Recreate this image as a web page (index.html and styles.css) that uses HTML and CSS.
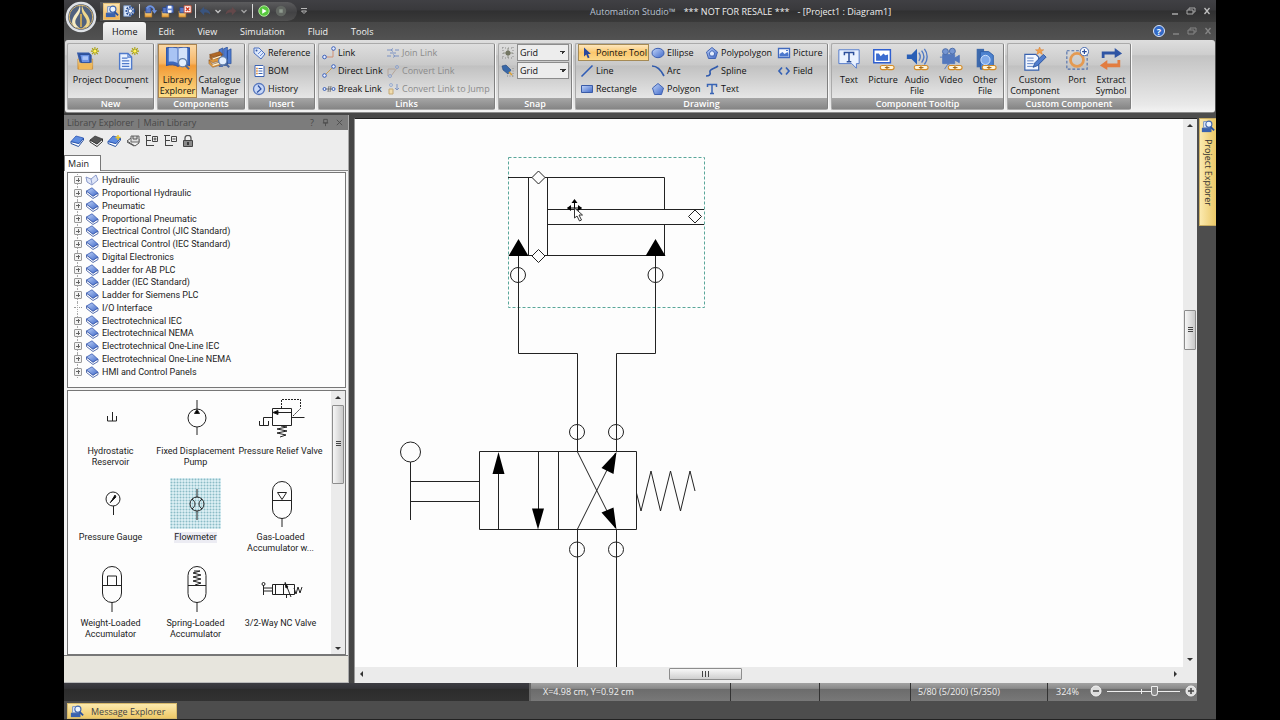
FILE: index.html
```html
<!DOCTYPE html>
<html lang="en">
<head>
<meta charset="utf-8">
<title>Automation Studio - [Project1 : Diagram1]</title>
<link rel="stylesheet" href="styles.css">
</head>
<body>
<svg class="sprite" aria-hidden="true">
  <defs>
    <linearGradient id="gBlue" x1="0" y1="0" x2="1" y2="1"><stop offset="0" stop-color="#c3d6fa"/><stop offset="1" stop-color="#3f68c8"/></linearGradient>
    <linearGradient id="gFolder" x1="0" y1="0" x2="0" y2="1"><stop offset="0" stop-color="#fbe2a0"/><stop offset="1" stop-color="#e39a35"/></linearGradient>
    <symbol id="book" viewBox="0 0 14 12"><path d="M1.500 4v2.500L8 11.500l5-3V6L8 9.200z" fill="#fff" stroke="#2c4a99" stroke-width=".8"/><path d="M1.500 4 7 .8 12.800 6 8 9.200z" fill="url(#gBlue)" stroke="#3a5bb0" stroke-width=".8"/></symbol>
    <symbol id="openbook" viewBox="0 0 14 12"><path d="M1 3l5 2 5-4 2 5-6 5-5-3z" fill="#dfe6f8" stroke="#7083bd" stroke-width=".8"/><path d="M6 5l1 5" stroke="#7083bd" stroke-width=".7"/></symbol>
    <symbol id="tbook" viewBox="0 0 14 12"><path d="M1 6.500v2L8.500 11.500 13.500 5V3L9 8.500z" fill="#fff" stroke="#27509f" stroke-width="1"/><path d="M1 6.500 6 1l7.500 2L9 8.500z" fill="#5f8de0" stroke="#2b55b2" stroke-width=".8"/></symbol>
    <symbol id="dbook" viewBox="0 0 14 12"><path d="M1 5v2l7 4.500 5.500-5V4L8 9z" fill="#fff" stroke="#333" stroke-width="1"/><path d="M1 5l5-4 7.500 3L8 9z" fill="#555" stroke="#333" stroke-width=".7"/></symbol>
    <symbol id="spark" viewBox="0 0 10 10"><path d="M5 0v10M0 5h10M1.500 1.500l7 7M8.500 1.500l-7 7" stroke="#a9a00c" stroke-width="1.300"/><circle cx="5" cy="5" r="1.800" fill="#fff45a"/></symbol>
    <symbol id="lens" viewBox="0 0 14 14"><circle cx="6" cy="6" r="4.500" fill="#e3efff" stroke="#6280ad" stroke-width="1.400"/><path d="M9.200 9.200 13 13" stroke="#4a659a" stroke-width="2.200"/></symbol>
    <symbol id="chain" viewBox="0 0 17 7"><rect x="1" y="1" width="8" height="4.500" rx="2.200" fill="#fff5dc" stroke="#d48b26" stroke-width="1.200"/><rect x="8" y="1" width="8" height="4.500" rx="2.200" fill="#fff5dc" stroke="#d48b26" stroke-width="1.200"/><path d="M6 3.300h5" stroke="#8c5c18"/></symbol>
    <symbol id="search-app" viewBox="0 0 16 16"><path d="M1 10h11v5H1z" fill="#3a62ae"/><path d="M3 3h7v7H3z" fill="#e3edfc" stroke="#6c8ac0"/><circle cx="9" cy="6" r="3.500" fill="#edf5ff" stroke="#456ab0" stroke-width="1.300"/><path d="M11 9l4 4" stroke="#2850a0" stroke-width="2"/></symbol>
    <symbol id="saveproj" viewBox="0 0 16 16"><path d="M1 8h8v7H1z" fill="url(#gFolder)" stroke="#b3752a" stroke-width=".6"/><path d="M2 4h6v6H2z" fill="#5877c4" stroke="#2c4689"/></symbol>
  </defs>
</svg>

<div class="app">
  <header class="top">
    <div class="titlebar">
      <div class="qat">
        <button class="q on" aria-label="Library Explorer"><svg viewBox="0 0 16 16"><use href="#search-app"/></svg></button>
        <button class="q" aria-label="Settings"><svg viewBox="0 0 16 16"><path d="M2 2h8v12H2z" fill="#dce8fa" stroke="#7796c8"/><circle cx="9.500" cy="8" r="4.500" fill="#dfe8f8" stroke="#234a94" stroke-width="2" stroke-dasharray="2 1.200"/><circle cx="9.500" cy="8" r="2.500" fill="#fff" stroke="#234a94"/></svg></button>
        <i class="qsep"></i>
        <button class="q" aria-label="Open project"><svg viewBox="0 0 16 16"><use href="#saveproj"/><path d="M3 5c3-4 8-3 9 3" fill="none" stroke="#6e93e0" stroke-width="2"/><path d="M9 7h6l-3 4z" fill="#6e93e0"/></svg></button>
        <button class="q" aria-label="Save project"><svg viewBox="0 0 16 16"><use href="#saveproj"/><path d="M6 2h8v8H6z" fill="#6e8cd8" stroke="#2f4b91"/><path d="M8 2h4v3H8zM8 7h4v3H8z" fill="#fff"/></svg></button>
        <button class="q" aria-label="Close project"><svg viewBox="0 0 16 16"><use href="#saveproj"/><path d="M7 2h8v8H7z" fill="#fff" stroke="#c84c30"/><path d="M9 4l4 4M13 4l-4 4" stroke="#d33a22" stroke-width="1.600"/></svg></button>
        <i class="qsep"></i>
        <button class="q mid" aria-label="Undo"><svg viewBox="0 0 16 16"><path d="M2 8l5-5v3c5 0 7 3 7 6-2-2-4-3-7-2v3z" fill="#39547f"/></svg></button>
        <button class="q narrow" aria-label="Undo list"><svg viewBox="0 0 8 8"><path d="M1.500 3 4 5.500 6.500 3" fill="none" stroke="#c4c4c4" stroke-width="1.300"/></svg></button>
        <button class="q mid" aria-label="Redo"><svg viewBox="0 0 16 16"><path d="M14 8 9 3v3C4 6 2 9 2 12c2-2 4-3 7-2v3z" fill="#64484a"/></svg></button>
        <button class="q narrow" aria-label="Redo list"><svg viewBox="0 0 8 8"><path d="M1.500 3 4 5.500 6.500 3" fill="none" stroke="#a4a4a4" stroke-width="1.300"/></svg></button>
        <i class="qsep"></i>
        <button class="q" aria-label="Run"><svg viewBox="0 0 16 16"><circle cx="8" cy="8" r="6" fill="#58c83e" stroke="#bdf0a9" stroke-width="1"/><path d="M6 5l5 3-5 3z" fill="#fff"/></svg></button>
        <button class="q" aria-label="Stop"><svg viewBox="0 0 16 16"><circle cx="8" cy="8" r="6" fill="#626762"/><path d="M6 6h4v4H6z" fill="#8e998e"/></svg></button>
      </div>
      <button class="q narrow" aria-label="Customize toolbar"><svg viewBox="0 0 8 8"><path d="M1 1.500h6M1.500 4h5L4 6.500z" fill="none" stroke="#b8b8b8"/></svg></button>
      <h1 class="title"><span class="prod">Automation Studio™</span><span>*** NOT FOR RESALE ***</span><span>- [Project1 : Diagram1]</span></h1>
      <div class="winbtns">
        <button aria-label="Minimize"><svg viewBox="0 0 10 10"><path d="M2 8h6" stroke="#a8a8a8" stroke-width="1.500"/></svg></button>
        <button aria-label="Restore"><svg viewBox="0 0 10 10"><path d="M1 4h6v4H1zM3 4V2h6v4H7" fill="none" stroke="#a8a8a8"/></svg></button>
        <button aria-label="Close"><svg viewBox="0 0 10 10"><path d="M2.500 2l5 6M7.500 2l-5 6" stroke="#c0c0c0" stroke-width="1.300"/></svg></button>
      </div>
    </div>
    <div class="tabrow">
      <nav class="tabs">
        <button class="tab active">Home</button><button class="tab">Edit</button><button class="tab">View</button><button class="tab">Simulation</button><button class="tab">Fluid</button><button class="tab">Tools</button>
      </nav>
      <div class="docbtns">
        <button aria-label="Help" class="help">?</button>
        <button aria-label="Minimize diagram"><svg viewBox="0 0 10 10"><path d="M2 8h6" stroke="#858585" stroke-width="1.500"/></svg></button>
        <button aria-label="Restore diagram"><svg viewBox="0 0 10 10"><path d="M1 4h6v4H1zM3 4V2h6v4H7" fill="none" stroke="#858585"/></svg></button>
        <button aria-label="Close diagram"><svg viewBox="0 0 10 10"><path d="M2.500 2l5 6M7.500 2l-5 6" stroke="#858585" stroke-width="1.300"/></svg></button>
      </div>
    </div>
    <button class="logo" aria-label="Application menu"><svg viewBox="0 0 32 32"><circle cx="16" cy="16" r="14" fill="#40506c" stroke="#dfe2e6" stroke-width="2.500"/><circle cx="16" cy="16" r="11.800" fill="#51627e" stroke="#d9b66c" stroke-width="1"/><path d="M15 4c1 7-1 9-3.500 13s-1 7 3 10l-5-1c-3-3-3-6-1-10s5.500-6 6.500-12z" fill="#f7ecc4"/><path d="M17 4c-1 7 1 9 3.500 13s1 7-3 10l5-1c3-3 3-6 1-10s-5.500-6-6.500-12z" fill="#f0d68c"/><path d="M16 13v13" stroke="#e8b94e" stroke-width="1.500"/></svg></button>
  </header>

  <section class="ribbon">
    <div class="group g-new"><div class="gbody">
      <button class="big"><svg viewBox="0 0 26 26"><path d="M2 13h16v11H2z" fill="url(#gFolder)" stroke="#c18732" stroke-width=".7"/><path d="M1 6h13l3 3v8H4z" fill="#355aa8"/><path d="M4 8h11v9H6z" fill="#6a92e4" stroke="#27488f"/><path d="M7 10h6v4H7z" fill="#a9c3f8"/><path d="M4 18h14l-1 6H3z" fill="#efb95c"/><use href="#spark" x="16" y="0" width="9" height="9"/></svg><span>Project</span></button>
      <button class="big"><svg viewBox="0 0 26 26"><path d="M5 7h9l4 4v13H5z" fill="#eaf2ff" stroke="#4f7acb" stroke-width="1.500"/><path d="M14 7v4h4M7.500 12h6M7.500 15h8M7.500 18h8M7.500 21h8" fill="none" stroke="#4f7acb" stroke-width="1.200"/><use href="#spark" x="17" y="0" width="9" height="9"/></svg><span>Document</span><i class="caret"></i></button>
    </div><h2>New</h2></div>

    <div class="group g-comp"><div class="gbody flush">
      <button class="big on"><svg viewBox="0 0 26 26"><path d="M0 1c5-1 9-1 13 0 4-1 8-1 13 0v19c-5-1-9-1-13 1-4-2-8-2-13-1z" fill="#3d68bd" stroke="#24489b"/><path d="M3 1c4-.5 7-.3 10 .5v16c-3-1.500-6-2-10-1.500z" fill="#a9c4f4"/><path d="M13 1.500c3-.8 6-1 10-.5v15c-4-.5-7 0-10 1.500z" fill="#d3e2fb"/><path d="M13 2v18" stroke="#3f65b4"/><use href="#lens" x="12" y="11" width="14" height="14"/></svg><span>Library<br>Explorer</span></button>
      <button class="big"><svg viewBox="0 0 26 26"><path d="M12 3l4-2v20h-4zM17 2l4-2v20h-4zM21 4l4-2v16h-4z" fill="#4e7ad0" stroke="#214891" stroke-width=".7"/><path d="M2 8l11-3 3 3-11 3zM2 8v4l3 3 10-3V8L5 12z" fill="#b16825" stroke="#7d4517" stroke-width=".5"/><path d="M1 14l11-2 4 2-11 3zM1 14v4l4 4 11-3v-4L5 19z" fill="#db963e" stroke="#8d5420" stroke-width=".5"/><path d="M5 13l9-3M5 20l10-3" stroke="#fff4d5" stroke-width="1.400"/><use href="#lens" x="10" y="9" width="14" height="14"/></svg><span>Catalogue<br>Manager</span></button>
    </div><h2>Components</h2></div>

    <div class="group g-insert"><div class="gbody rows">
      <button class="cmd"><svg viewBox="0 0 14 14"><path d="M2 2h5l6 6-4 5-7-6z" fill="#dce8fc" stroke="#4a6fbe"/><circle cx="4.500" cy="4.500" r="1" fill="#3157a7"/><path d="M6 8l3-3M8 10l3-3" stroke="#6a8ad0"/></svg>Reference</button>
      <button class="cmd"><svg viewBox="0 0 14 14"><path d="M3 1.500h8l1 1v10H3z" fill="#fff" stroke="#3d63b2"/><path d="M6.500 4.500h4M6.500 7h4M6.500 9.500h4" stroke="#3d63b2"/><path d="M4.200 4.500h1.500M4.200 7h1.500M4.200 9.500h1.500" stroke="#d8822c" stroke-width="1.500"/></svg>BOM</button>
      <button class="cmd"><svg viewBox="0 0 14 14"><circle cx="7" cy="7" r="5.500" fill="#c7d7f7" stroke="#5676bd" stroke-width="1.300"/><path d="M6 3.500 9 7l-4 3.500" fill="none" stroke="#2c50a3" stroke-width="1.200"/></svg>History</button>
    </div><h2>Insert</h2></div>

    <div class="group g-links"><div class="gbody rows">
      <button class="cmd"><svg viewBox="0 0 14 14"><path d="M3 11h8V3" fill="none" stroke="#cf8f75"/><circle cx="2.500" cy="11" r="1.800" fill="#e6edff" stroke="#3a5fb8"/><circle cx="11.500" cy="2.500" r="1.800" fill="#e6edff" stroke="#3a5fb8"/></svg>Link</button>
      <button class="cmd"><svg viewBox="0 0 14 14"><path d="M3 11l8-8" stroke="#c69d52"/><circle cx="2.500" cy="11.500" r="1.800" fill="#e6edff" stroke="#3a5fb8"/><circle cx="11.500" cy="2.500" r="1.800" fill="#e6edff" stroke="#3a5fb8"/></svg>Direct Link</button>
      <button class="cmd"><svg viewBox="0 0 14 14"><path d="M4 7h6M6 10l1-6M8 10l1-6" stroke="#777"/><circle cx="2.500" cy="7" r="1.500" fill="#e6edff" stroke="#3a5fb8"/><circle cx="11.500" cy="7" r="1.500" fill="#e6edff" stroke="#3a5fb8"/></svg>Break Link</button>
      <button class="cmd" disabled><svg viewBox="0 0 14 14"><path d="M1 4h4M9 4h4M1 10h4M9 10h4M5 4l2-1.500M5 4l2 1.500M9 10l-2-1.500M9 10l-2 1.500M4 7h6" stroke="#7c93c4"/></svg>Join Link</button>
      <button class="cmd" disabled><svg viewBox="0 0 14 14"><path d="M2 12V5h7M5 12l6-8" fill="none" stroke="#b3a49a"/><circle cx="11" cy="3" r="1.500" fill="none" stroke="#8fa3cc"/><circle cx="4" cy="12" r="1.500" fill="none" stroke="#8fa3cc"/></svg>Convert Link</button>
      <button class="cmd" disabled><svg viewBox="0 0 14 14"><circle cx="5" cy="3" r="1.500" fill="none" stroke="#9aaed3"/><path d="M3 7h4v5H3z" fill="#f0dcae" stroke="#c4a874"/><path d="M11 2v6M9 6l2 2 2-2" fill="none" stroke="#7e95c5"/></svg>Convert Link to Jump</button>
    </div><h2>Links</h2></div>

    <div class="group g-snap"><div class="gbody snap">
      <label for="s1" aria-label="Snap"><svg viewBox="0 0 14 14"><path d="M1 2h12M1 12h12M2 1v12M12 1v12" stroke="#8c8c8c" stroke-dasharray="1 2"/><circle cx="7" cy="7" r="2.500" fill="#71745c"/><path d="M7 2v10M2 7h10" stroke="#77796a" stroke-width=".7"/></svg></label>
      <select id="s1"><option>Grid</option></select>
      <label for="s2" aria-label="Align"><svg viewBox="0 0 14 14"><path d="M6 12h7M12 4v9" stroke="#8c8c8c" stroke-dasharray="1 1.500"/><path d="M1 2l4-1 5 5-3 4-5-4z" fill="#3868a8" stroke="#24477c" stroke-width=".6"/><path d="M8 8l3 3" stroke="#d99f33" stroke-width="1.600"/></svg></label>
      <select id="s2"><option>Grid</option></select>
    </div><h2>Snap</h2></div>

    <div class="group g-draw"><div class="gbody rows">
      <button class="cmd on"><svg viewBox="0 0 14 14"><path d="M4 1.500v9l2.300-2 1.500 3.700 1.700-.8L8 8h3z" fill="#27479d"/></svg>Pointer Tool</button>
      <button class="cmd"><svg viewBox="0 0 14 14"><path d="M1.500 12.500l11-11" stroke="#2f5cb6" stroke-width="1.600"/></svg>Line</button>
      <button class="cmd"><svg viewBox="0 0 14 14"><path d="M1.500 3.500h11v7h-11z" fill="url(#gBlue)" stroke="#3a5ba7"/></svg>Rectangle</button>
      <button class="cmd"><svg viewBox="0 0 14 14"><ellipse cx="7" cy="7" rx="6" ry="4.700" fill="url(#gBlue)" stroke="#3d60b2"/></svg>Ellipse</button>
      <button class="cmd"><svg viewBox="0 0 14 14"><path d="M1 2c6 0 9 4 12 10" fill="none" stroke="#315bad" stroke-width="1.700"/></svg>Arc</button>
      <button class="cmd"><svg viewBox="0 0 14 14"><path d="M7 1.500 12.500 6l-2 6.500h-7L1.500 6z" fill="url(#gBlue)" stroke="#4163b2"/></svg>Polygon</button>
      <button class="cmd"><svg viewBox="0 0 14 14"><path d="M7 1.500 12.500 6l-2 6.500h-7L1.500 6z" fill="url(#gBlue)" stroke="#4163b2"/><path d="M7 4.500 9.800 7l-1 3H5.200l-1-3z" fill="#e4eeff" stroke="#4163b2"/></svg>Polypolygon</button>
      <button class="cmd"><svg viewBox="0 0 14 14"><path d="M1 12c3 0 5-1 4-4s4-3 8-6" fill="none" stroke="#315bad" stroke-width="1.700"/></svg>Spline</button>
      <button class="cmd"><svg viewBox="0 0 14 14"><path d="M2.500 5V2.500h9V5M7 2.500v9M5 11.500h4" fill="none" stroke="#3864b5" stroke-width="1.500"/></svg>Text</button>
      <button class="cmd"><svg viewBox="0 0 14 14"><path d="M1.500 2.500h11v9h-11z" fill="#f4f8ff" stroke="#4169bd" stroke-width="1.300"/><path d="M2.500 10.500V8l3-2 2 2 3-2 1 2v2.500z" fill="#4c78cd"/><path d="M9 4.500h2" stroke="#4c78cd"/></svg>Picture</button>
      <button class="cmd"><svg viewBox="0 0 14 14"><path d="M5 3.500 2 7l3 3.500M9 3.500 12 7l-3 3.500" fill="none" stroke="#3662b5" stroke-width="1.700"/></svg>Field</button>
    </div><h2>Drawing</h2></div>

    <div class="group g-tip"><div class="gbody">
      <button class="big"><svg viewBox="0 0 26 26"><path d="M2 3h22v15h-3v5l-5-5H2z" fill="#eaf2ff" stroke="#4d76cb"/><path d="M8 9V6h10v3M13 6v10M10.500 16h5" fill="none" stroke="#2c4f9b" stroke-width="1.600"/></svg><span>Text</span></button>
      <button class="big"><svg viewBox="0 0 26 26"><path d="M3 3h18v14H3z" fill="#fff" stroke="#2f5fd0" stroke-width="1.600"/><path d="M5.500 15v-8h3l2 3 3-3 2 2 3-1v7z" fill="#3b6cd0"/><use href="#chain" x="9" y="19" width="17" height="7"/></svg><span>Picture</span></button>
      <button class="big"><svg viewBox="0 0 26 26"><path d="M2 8h5l6-6v17l-6-6H2z" fill="#285eb6"/><path d="M15 6c2 3 2 6 0 9M18 4c3 4 3 9 0 13M21 2c4 5 4 12 0 17" fill="none" stroke="#5079c4" stroke-width="1.500"/><use href="#chain" x="9" y="19" width="17" height="7"/></svg><span>Audio<br>File</span></button>
      <button class="big"><svg viewBox="0 0 26 26"><path d="M4 8h13v10H4zM17 12l5-3v8l-5-3zM10 18l4 6M10 18l-4 6M1 11h3" fill="#5478bd" stroke="#5478bd"/><circle cx="7" cy="5" r="3.200" fill="#7696d2" stroke="#4767a5"/><circle cx="14.500" cy="4.500" r="3.200" fill="#7696d2" stroke="#4767a5"/><use href="#chain" x="9" y="19" width="17" height="7"/></svg><span>Video</span></button>
      <button class="big"><svg viewBox="0 0 26 26"><path d="M4 2h8v20H4z" fill="#3e6aac"/><path d="M8 5h9l5 4v15H8z" fill="#4d82cf" stroke="#2c5ca6"/><circle cx="13.500" cy="14" r="5" fill="#80aaea" stroke="#d4e5ff"/><use href="#chain" x="9" y="19" width="17" height="7"/></svg><span>Other<br>File</span></button>
    </div><h2>Component Tooltip</h2></div>

    <div class="group g-cust"><div class="gbody">
      <button class="big w-cc"><svg viewBox="0 0 26 26"><path d="M2 8h12l3 3v14H2z" fill="#f3f7ff" stroke="#3761ae" stroke-width="1.300"/><path d="M4.500 12h7M4.500 15h7M4.500 18h7M4.500 21h7" stroke="#587dc1"/><path d="M11 22l2-5L22 8l3 3-9 9z" fill="#517dcd" stroke="#28529d"/><path d="M18 0l1.300 3h3.200L20 5l1 3-3-1.800L15 8l1-3-2.500-2h3.200z" fill="#f0a04a" stroke="#d7792d" stroke-width=".5"/></svg><span>Custom<br>Component</span></button>
      <button class="big w-port"><svg viewBox="0 0 26 26"><path d="M2 4h22v20H2z" fill="none" stroke="#4f6fab" stroke-width="1.200" stroke-dasharray="3 2"/><circle cx="13" cy="14" r="7" fill="none" stroke="#e49a52" stroke-width="3"/><circle cx="21" cy="5" r="4.500" fill="#fff" stroke="#3e62ac"/><path d="M21 2.500v5M18.500 5h5" stroke="#2a4c9b" stroke-width="1.300"/></svg><span>Port</span></button>
      <button class="big w-ext"><svg viewBox="0 0 26 26"><path d="M3 12V5h14V1l8 6-8 5V8H6v4z" fill="#2f55a4"/><path d="M23 14v8H9v3l-8-5 8-6v4h11v-4z" fill="#e27c40"/></svg><span>Extract<br>Symbol</span></button>
    </div><h2>Custom Component</h2></div>
  </section>

  <main class="work">
    <aside class="lib">
      <div class="libtitle"><h2>Library Explorer | Main Library</h2><button aria-label="Panel help">?</button><button aria-label="Pin"><svg viewBox="0 0 10 10"><path d="M3 1.500h4v4H3zM2 5.500h6M5 5.500V9" fill="none" stroke="#4d4d4d"/></svg></button><button aria-label="Close panel"><svg viewBox="0 0 10 10"><path d="M2 2l6 6M8 2l-6 6" stroke="#4d4d4d"/></svg></button></div>
      <div class="libtools">
        <button aria-label="Open library"><svg viewBox="0 0 14 12"><use href="#tbook"/></svg></button>
        <button aria-label="Close library"><svg viewBox="0 0 14 12"><use href="#dbook"/></svg></button>
        <button aria-label="New library"><svg viewBox="0 0 14 12"><use href="#tbook"/><path d="M11 0v5M8.500 2.500h5" stroke="#e8c52a" stroke-width="1.500"/></svg></button>
        <button aria-label="Save library"><svg viewBox="0 0 14 12"><path d="M1 6l4-3 8 1v4l-4 3z" fill="#eee" stroke="#555"/><path d="M5 1h8v6H5z" fill="#ddd" stroke="#666"/><path d="M7 1v3h4V1M1 7l7 4" fill="none" stroke="#555"/></svg></button>
        <button aria-label="Expand all"><svg viewBox="0 0 14 12"><path d="M2.500 0v11M1 .5h6M3 5.500h4M3 10.500h7M8.500 1.500h5v5h-5zM11 2.500v3M9.500 4h3" fill="none" stroke="#444"/></svg></button>
        <button aria-label="Collapse all"><svg viewBox="0 0 14 12"><path d="M2.500 0v11M1 .5h6M3 5.500h4M3 10.500h7M8.500 1.500h5v5h-5zM9.500 4h3" fill="none" stroke="#444"/></svg></button>
        <button aria-label="Lock"><svg viewBox="0 0 14 12"><path d="M4 6V3c0-3.500 6-3.500 6 0v3" fill="none" stroke="#555" stroke-width="1.300"/><path d="M2.500 5.500h9v6h-9z" fill="#8a8a8a" stroke="#444"/><path d="M7 7v3" stroke="#222" stroke-width="1.500"/></svg></button>
      </div>
      <div class="libtab"><button>Main</button></div>
      <div class="libbody">
        <ul class="tree">
          <li><button class="ex" aria-label="Expand"></button><svg><use href="#openbook"/></svg>Hydraulic</li>
          <li><button class="ex" aria-label="Expand"></button><svg><use href="#book"/></svg>Proportional Hydraulic</li>
          <li><button class="ex" aria-label="Expand"></button><svg><use href="#book"/></svg>Pneumatic</li>
          <li><button class="ex" aria-label="Expand"></button><svg><use href="#book"/></svg>Proportional Pneumatic</li>
          <li><button class="ex" aria-label="Expand"></button><svg><use href="#book"/></svg>Electrical Control (JIC Standard)</li>
          <li><button class="ex" aria-label="Expand"></button><svg><use href="#book"/></svg>Electrical Control (IEC Standard)</li>
          <li><button class="ex" aria-label="Expand"></button><svg><use href="#book"/></svg>Digital Electronics</li>
          <li><button class="ex" aria-label="Expand"></button><svg><use href="#book"/></svg>Ladder for AB PLC</li>
          <li><button class="ex" aria-label="Expand"></button><svg><use href="#book"/></svg>Ladder (IEC Standard)</li>
          <li><button class="ex" aria-label="Expand"></button><svg><use href="#book"/></svg>Ladder for Siemens PLC</li>
          <li><i class="leaf"></i><svg><use href="#book"/></svg>I/O Interface</li>
          <li><button class="ex" aria-label="Expand"></button><svg><use href="#book"/></svg>Electrotechnical IEC</li>
          <li><button class="ex" aria-label="Expand"></button><svg><use href="#book"/></svg>Electrotechnical NEMA</li>
          <li><button class="ex" aria-label="Expand"></button><svg><use href="#book"/></svg>Electrotechnical One-Line IEC</li>
          <li><button class="ex" aria-label="Expand"></button><svg><use href="#book"/></svg>Electrotechnical One-Line NEMA</li>
          <li><button class="ex" aria-label="Expand"></button><svg><use href="#book"/></svg>HMI and Control Panels</li>
        </ul>
        <div class="listbox">
          <div class="symbols">
            <button class="sym"><svg viewBox="0 0 51 51"><path d="M22.500 24v5h9v-5M27.500 20v9"/></svg><span>Hydrostatic<br>Reservoir</span></button>
            <button class="sym"><svg viewBox="0 0 51 51"><circle cx="27" cy="26" r="9"/><path d="M27 8v9M27 35v8"/><path d="M24.500 21.500l2.500-4 2.500 4z" fill="#000"/></svg><span>Fixed Displacement<br>Pump</span></button>
            <button class="sym"><svg viewBox="0 0 51 51"><path d="M17.500 16.500h19v17h-19zM36.500 25.500h13M17.500 25.500h-9v8M4.500 29v4.500h9V29"/><path d="M18 20.500h18"/><path d="M18 20.500l5-2v4z" fill="#000"/><path d="M26.500 16V7.500h19v9l-8 8" stroke-dasharray="2 1"/><path d="M26 34l6 1-10 2 10 2-10 2 9 2-6 2"/></svg><span>Pressure Relief Valve</span></button>
            <button class="sym"><svg viewBox="0 0 51 51"><circle cx="28" cy="21" r="7"/><path d="M28.500 28v9M25 25l5-7"/><path d="M26 24l4-7 1 2z" fill="#000"/></svg><span>Pressure Gauge</span></button>
            <button class="sym sel"><svg viewBox="0 0 51 51"><circle cx="27" cy="26" r="7"/><path d="M27 11v8M27 33v9M22 21c4 3 4 7 0 10M32 21c-4 3-4 7 0 10"/></svg><span>Flowmeter</span></button>
            <button class="sym"><svg viewBox="0 0 51 51"><rect x="17.500" y="3.500" width="19" height="37" rx="9.500"/><path d="M17.500 22.500h19M27 40v9M22.500 14.500h9l-4.500 7z"/></svg><span>Gas-Loaded<br>Accumulator w...</span></button>
            <button class="sym"><svg viewBox="0 0 51 51"><rect x="17.500" y="2.500" width="19" height="36" rx="9.500"/><path d="M17.500 21.500h19M22.500 21v-9h9v9M27 38v10"/></svg><span>Weight-Loaded<br>Accumulator</span></button>
            <button class="sym"><svg viewBox="0 0 51 51"><rect x="18" y="2.500" width="18" height="36" rx="9"/><path d="M18 21.500h18M27 38v10M24 7h6l-7 2 8 2-8 2 8 2-8 2 8 2-6 2"/></svg><span>Spring-Loaded<br>Accumulator</span></button>
            <button class="sym"><svg viewBox="0 0 51 51"><path d="M17.500 20.500h22v10h-22zM28.500 20.500v10M17 24h-9M17 27h-9M8.500 21v10M20.500 30v-9M30 18l6 15M31.500 31v3M39 24l2 6 2-7 2 6 2-6"/><path d="M30 19l3 4-2 1z" fill="#000"/><circle cx="8.500" cy="20" r="1.500"/></svg><span>3/2-Way NC Valve</span></button>
          </div>
          <div class="sb v list"><button aria-label="Scroll up" class="ar up"></button><div class="trk"><div class="thumb"></div></div><button aria-label="Scroll down" class="ar down"></button></div>
        </div>
      </div>
      <div class="libfoot"></div>
    </aside>

    <section class="doc">
      <div class="canvas">
        <svg class="diagram" width="828" height="548" viewBox="355 119 828 548" fill="none" stroke="#222" stroke-width="1">
          <rect x="508.500" y="157.500" width="196" height="150" stroke="#5aa79a" stroke-dasharray="3 2"/>
          <path d="M508 177.500H664.500V209M664.500 224v31.500H518M528.500 177v78M547.500 177v78M547 209.500H704M547 224.500H704"/>
          <path d="M518.500 255V353.500H577.500V451M655.500 255V353.500H616.500V451" />
          <g fill="#fdfdfd"><path d="M538.500 171l6.500 6.500-6.500 6.500-6.500-6.500zM538.500 249.500l6.500 6.500-6.500 6.500-6.500-6.500zM695 210l6.500 6.500-6.500 6.500-6.500-6.500z"/></g>
          <path d="M518.500 239l10 17h-20zM655.500 239l10 17h-20z" fill="#000" stroke="none"/>
          <circle cx="518" cy="275" r="7.500"/><circle cx="655.500" cy="275" r="7.500"/>
          <circle cx="577" cy="432" r="7.500"/><circle cx="616" cy="432" r="7.500"/>
          <circle cx="577" cy="549.500" r="7.500"/><circle cx="616" cy="549.500" r="7.500"/>
          <path d="M479.500 451.500h157v78h-157zM558.500 451.500v78M498.500 529V466M538.500 452v62M577.500 452l38 76M577.500 529l38-76M577.500 529.500V667M616.500 529.500V667"/>
          <path d="M410.500 462v58M411 481.500h68M411 501.500h68"/><circle cx="410.500" cy="452" r="10"/>
          <path d="M636.500 493l4.500 18 10-40 9.500 40 10-40 10 40 9.500-40 5 20"/>
          <g fill="#000" stroke="none"><path d="M498.500 452l6 22h-12zM538 529.500l-6-21h12zM616.500 452l-3 22-12-6zM616.500 529.500l-15-17 12-5z"/></g>
          <g class="cursor"><path d="M574.500 200.500v14M567.500 208h14" stroke="#000"/><path d="M574.500 199l3 4h-6zM567 208l4-3v6zM582 208l-4-3v6z" fill="#000" stroke="none"/><path d="M574.500 208v10l2.500-2 2.500 5 2-1-2.500-5h3.500z" fill="#fff" stroke="#333"/></g>
        </svg>
      </div>
      <div class="sb v main"><button aria-label="Scroll up" class="ar up"></button><div class="trk"><div class="thumb"></div></div><button aria-label="Scroll down" class="ar down"></button></div>
      <div class="sb h"><button aria-label="Scroll left" class="ar left"></button><div class="trk"><div class="thumb"></div></div><button aria-label="Scroll right" class="ar right"></button></div>
    </section>
    <aside class="dock"><button class="pe"><svg viewBox="0 0 16 16"><use href="#search-app"/></svg><span>Project Explorer</span></button></aside>
  </main>

  <footer class="status">
    <div class="sblank"></div>
    <div class="cell c1">X=4.98 cm, Y=0.92 cm</div>
    <div class="cell c2"></div>
    <div class="cell c3"></div>
    <div class="cell c4">5/80 (5/200) (5/350)</div>
    <div class="cell c5"><label for="zoom">324%</label>
      <button class="zb" aria-label="Zoom out"><svg viewBox="0 0 12 12"><circle cx="6" cy="6" r="5" fill="#ddd" stroke="#f4f4f4"/><path d="M3 6h6" stroke="#444" stroke-width="1.500"/></svg></button>
      <input id="zoom" type="range" min="0" max="100" value="67">
      <button class="zb" aria-label="Zoom in"><svg viewBox="0 0 12 12"><circle cx="6" cy="6" r="5" fill="#ddd" stroke="#f4f4f4"/><path d="M3 6h6M6 3v6" stroke="#444" stroke-width="1.500"/></svg></button>
    </div>
  </footer>
  <div class="bottom"><button class="me"><svg viewBox="0 0 16 16"><use href="#search-app"/></svg><span>Message Explorer</span></button></div>
</div>
</body>
</html>
```

FILE: styles.css
```css
* { box-sizing: border-box; }
body { margin: 0; background: #000; font: 9px/11px "Open Sans", "Noto Sans", sans-serif; color: #111; }
button, select, input { font: inherit; color: inherit; margin: 0; }
button { background: none; border: 0; padding: 0; white-space: nowrap; }
h1, h2, ul { margin: 0; padding: 0; font: inherit; list-style: none; }
svg { display: block; flex: none; }
.sprite { width: 0; height: 0; position: absolute; }

.app { margin: 0 5%; min-height: 100vh; display: flex; flex-direction: column; background: #4d4d4d; }

/* Title bar and tabs */
.top { position: relative; }
.titlebar { height: 22px; display: flex; align-items: center; padding: 0 4px 0 36px; background: linear-gradient(#404044, #39393c 45%, #303031 50%, #3a3a3a); }
.qat { display: flex; align-items: center; height: 19px; padding: 0 8px 0 3px; border-radius: 0 10px 10px 0; background: linear-gradient(#5c5c5e, #424244 55%, #505050); }
.q { width: 17px; height: 17px; display: grid; place-items: center; border: 1px solid transparent; }
.q svg { width: 14px; height: 14px; }
.q.on { background: linear-gradient(#fbe3ae, #f4b455); border-color: #e5c07a; }
.q.mid, .q.narrow { width: 13px; border: 0; }
.q.narrow svg { width: 8px; height: 8px; }
.qsep { width: 1px; height: 14px; background: #d8d8d8; margin: 0 2px; }
.title { flex: 1; display: flex; gap: 8px; color: #f0f0f0; padding-left: 280px; white-space: pre; }
.title .prod { color: #b9c3d2; }
.winbtns, .docbtns { display: flex; gap: 6px; align-items: center; }
.winbtns svg, .docbtns svg { width: 10px; height: 10px; }
.tabrow { height: 18px; display: flex; justify-content: space-between; padding: 0 3px 0 39px; background: linear-gradient(#474747, #525252); }
.tabs { display: flex; gap: 1px; }
.tab { color: #f2f2f2; padding: 1px 11px 0; }
.tab.active { background: linear-gradient(#f5f5f5, #dcdcdc); color: #111; border-radius: 3px 3px 0 0; padding: 1px 9px 0; }
.help { width: 12px; height: 12px; border-radius: 50%; background: #3269c6; border: 1px solid #dbe6fa; color: #fff; font-weight: 700; line-height: 9px; }
.logo { position: absolute; left: 1px; top: 1px; }
.logo svg { width: 32px; height: 32px; }

/* Ribbon */
.ribbon { height: 73px; display: flex; gap: 3px; margin: 0 1px; padding: 3px 2px 2px; border-radius: 3px; border-bottom: 1px solid #8b8b8b; background: linear-gradient(#dedede, #cecece 20%, #c3c3c3 22%, #e9e9e9 90%, #f3f3f3); }
.group { display: flex; flex-direction: column; flex: none; border: 1px solid #aaa; border-right-color: #808080; border-radius: 2px; background: linear-gradient(#dedede, #c9c9c9 32%, #c1c1c1 34%, #ebebeb 90%); box-shadow: 1px 0 #f7f7f7; }
.g-new { width: 87px; } .g-comp { width: 88px; } .g-insert { width: 67px; } .g-links { width: 177px; }
.g-snap { width: 74px; } .g-draw { width: 253px; } .g-tip { width: 173px; } .g-cust { width: 124px; }
.group h2 { height: 11px; text-align: center; font: 600 9px/11px "Open Sans", "Noto Sans", sans-serif; color: #fff; background: linear-gradient(#a6a6a6, #858585); }
.gbody { flex: 1; display: flex; }
.big { display: flex; flex-direction: column; align-items: center; justify-content: flex-start; width: 34px; padding-top: 2px; line-height: 11px; border: 1px solid transparent; }
.big svg { width: 24px; height: 24px; margin-bottom: 3px; }
.big br { line-height: 11px; }
.g-new .big { width: 39px; }
.g-comp .big { width: 39px; } .g-comp .big + .big { width: 45px; }
.big.w-cc { width: 54px; } .big.w-port { width: 30px; } .big.w-ext { width: 38px; }
.big.on { background: linear-gradient(#fbd9a6, #f7b565 35%, #f29a35 40%, #fce08a); border-color: #a98350; }
.caret { border: 2px solid transparent; border-top-color: #333; margin-top: 2px; }
.rows { display: grid; grid-template-rows: repeat(3, 17px); grid-auto-flow: column; row-gap: 1px; padding-left: 2px; justify-content: start; }
.g-insert .rows { grid-auto-columns: 60px; padding-left: 1px; }
.g-links .rows { grid-template-columns: 64px 108px; padding-left: 1px; }
.g-draw .rows { grid-template-columns: 71px 54px 72px 48px; }
.cmd { display: flex; align-items: center; gap: 2px; padding: 0 1px; border: 1px solid transparent; }
.cmd svg { width: 14px; height: 14px; }
.cmd:disabled { color: #8b8b8b; }
.cmd.on { border: 1px solid #a58a55; background: linear-gradient(#fde6bd, #fac76d 50%, #fbd98d); }
.snap { display: grid; grid-template-columns: 15px 52px; grid-template-rows: 17px 17px; row-gap: 1px; column-gap: 1px; padding-left: 2px; align-content: start; align-items: center; }
.snap svg { width: 14px; height: 14px; }
select { appearance: none; height: 17px; width: 52px; border: 1px solid #8c8c8c; border-radius: 0; padding: 0 2px; background: linear-gradient(45deg, transparent 50%, #333 50%) 42px 6px / 3px 3px no-repeat, linear-gradient(-45deg, transparent 50%, #333 50%) 45px 6px / 3px 3px no-repeat, #ededed; }

/* Work area */
.work { flex: 1; display: flex; min-height: 0; padding-top: 2px; background: linear-gradient(90deg, #3c3c3c, #4d4d4d 40%); }
.lib { width: 285px; display: flex; flex-direction: column; background: #ededed; border-right: 1px solid #aaa; font-family: Roboto, "Noto Sans", sans-serif; color: #222; }
.libtitle { height: 15px; display: flex; align-items: center; gap: 4px; background: #7c7c7c; color: #484848; padding: 0 3px; font: 9px/11px "Open Sans", "Noto Sans", sans-serif; }
.libtitle h2 { flex: 1; }
.libtitle button { width: 10px; }
.libtitle svg { width: 9px; height: 9px; }
.libtools { height: 25px; width: 137px; display: flex; justify-content: space-between; align-items: center; padding: 0 6px 4px; }
.libtools svg { width: 14px; height: 12px; }
.libtab { height: 16px; border-bottom: 1px solid #888; }
.libtab button { height: 16px; width: 37px; padding-right: 8px; background: #fff; border: 1px solid #777; border-bottom: 0; font: 9px/11px "Open Sans", "Noto Sans", sans-serif; }
.libbody { padding: 1px 2px 0 3px; background: #f4f4f4; border-bottom: 1px solid #777; flex: 1; display: flex; flex-direction: column; gap: 2px; }
.tree { height: 216px; display: grid; grid-auto-rows: 1fr; border: 1px solid #777; background: #fdfdfd; padding: 1px 0 9px 6px; }
.tree li { position: relative; display: flex; align-items: center; line-height: 12px; white-space: nowrap; }
.tree li::before { content: ""; position: absolute; left: 3px; top: 0; bottom: 0; border-left: 1px dotted #aaa; }
.tree svg { width: 14px; height: 12px; margin: 0 3px; }
.ex { position: relative; width: 8px; height: 8px; border: 1px solid #999; border-radius: 1px; background: linear-gradient(#666, #666) 1px 50% / 4px 1px no-repeat, linear-gradient(#666, #666) 50% 1px / 1px 4px no-repeat, #f3f3f3; }
.leaf { width: 8px; margin: 0; border-top: 1px dotted #999; }
.listbox { flex: 1; display: flex; border: 1px solid #777; background: #fdfdfd; }
.symbols { flex: 1; display: grid; grid-template-columns: repeat(3, 1fr); grid-auto-rows: 76px; row-gap: 10px; padding: 1px 8px 0 0; align-content: start; }
.sym { display: flex; flex-direction: column; align-items: center; gap: 3px; justify-content: flex-start; }
.sym svg { width: 51px; height: 51px; fill: none; stroke: #222; stroke-width: 1; }
.sym.sel svg { background: radial-gradient(#8bbcc6 25%, #d8edf2 60%) 0 0 / 3px 3px; }
.sym.sel span { background: #ececf3; }
.libfoot { height: 27px; background: #e7e5dd; border-bottom: 1px solid #bbb; }

/* Scroll bars */
.sb { display: flex; background: #ebebeb; }
.sb.v { flex-direction: column; width: 14px; padding: 0 1px; }
.trk { flex: 1; display: flex; }
.sb.v .trk { flex-direction: column; }
.trk::before, .trk::after { content: ""; }
.thumb { flex: none; border: 1px solid #8d8d8d; border-radius: 1px; background: linear-gradient(90deg, #f6f6f6, #c9c9c9); display: grid; place-items: center; }
.thumb::before { content: ""; width: 5px; height: 6px; background: repeating-linear-gradient(#444 0 1px, transparent 1px 2px); }
.list .thumb { height: 79px; } .list .trk::before { flex: 1; } .list .trk::after { flex: 80; }
.main .thumb { height: 40px; } .main .trk::before { flex: 180; } .main .trk::after { flex: 304; }
.sb.v.main { padding-bottom: 2px; }
.h .thumb { width: 73px; background: linear-gradient(#f8f8f8, #cfcfcf); } .h .trk::before { flex: 301; } .h .trk::after { flex: 425; }
.h .thumb::before { width: 7px; background: repeating-linear-gradient(90deg, #444 0 1px, transparent 1px 3px); }
.sb.h { grid-column: 1 / 3; height: 16px; padding: 1px 16px 3px 0; }
.ar { width: 12px; height: 12px; display: grid; place-items: center; }
.ar::before { content: ""; border: 3px solid transparent; }
.up::before { border-top: 0; border-bottom-color: #333; }
.down::before { border-bottom: 0; border-top-color: #333; }
.left::before { border-left: 0; border-right-color: #333; }
.right::before { border-right: 0; border-left-color: #333; }

/* Diagram window */
.doc { flex: 1; min-width: 0; margin: 3px 0 0 5px; border-left: 1px solid #999; border-top: 1px solid #222; display: grid; grid-template: minmax(0, 1fr) auto / minmax(0, 1fr) auto; background: #ebebeb; }
.canvas { min-width: 0; overflow: hidden; background: #fdfdfd; }

/* Docked panel tab */
.dock { width: 19px; padding: 3px 0 0 2px; }
.pe { width: 17px; height: 108px; display: flex; flex-direction: column; align-items: center; gap: 6px; background: linear-gradient(90deg, #fbe9ae, #eac766); border: 1px solid #c9ad62; border-right: 0; color: #333; }
.pe svg, .me svg { width: 14px; height: 14px; }
.pe span { writing-mode: vertical-rl; }

/* Status bar */
.status { height: 18px; display: flex; color: #f0f0f0; margin-right: 19px; background: linear-gradient(#a2a2a2, #8a8a8a 30%, #6c6c6c 35%, #787878); }
.sblank { width: 467px; border-right: 2px solid #666; background: linear-gradient(#3d3d43, #333337 30%, #2c2c2c 35%, #323232); }
.cell { display: flex; align-items: center; padding-bottom: 2px; border-right: 1px solid #333; white-space: nowrap; }
.c1 { flex: 1; padding-left: 12px; }
.c2 { width: 89px; } .c3 { width: 91px; }
.c4 { width: 137px; padding-left: 7px; }
.c5 { width: 149px; padding-left: 8px; border: 0; gap: 5px; }
.c5 label { width: 29px; }
.zb svg { width: 12px; height: 12px; }
#zoom { appearance: none; flex: 1; min-width: 0; height: 12px; background: linear-gradient(#eee, #eee) 0 50% / 100% 1px no-repeat, linear-gradient(#eee, #eee) 34px 50% / 1px 5px no-repeat; }
#zoom::-webkit-slider-thumb { appearance: none; width: 7px; height: 10px; border: 1px solid #eee; border-radius: 1px 1px 4px 4px; background: #888; }
.bottom { height: 19px; padding: 2px 3px; background: #4d4d4d; border-bottom: 1px solid #222; }
.me { display: flex; align-items: center; gap: 7px; width: 110px; height: 16px; padding-left: 2px; background: linear-gradient(#fbe9ae, #eec967); border: 1px solid #d7ba6c; color: #444; }
```
